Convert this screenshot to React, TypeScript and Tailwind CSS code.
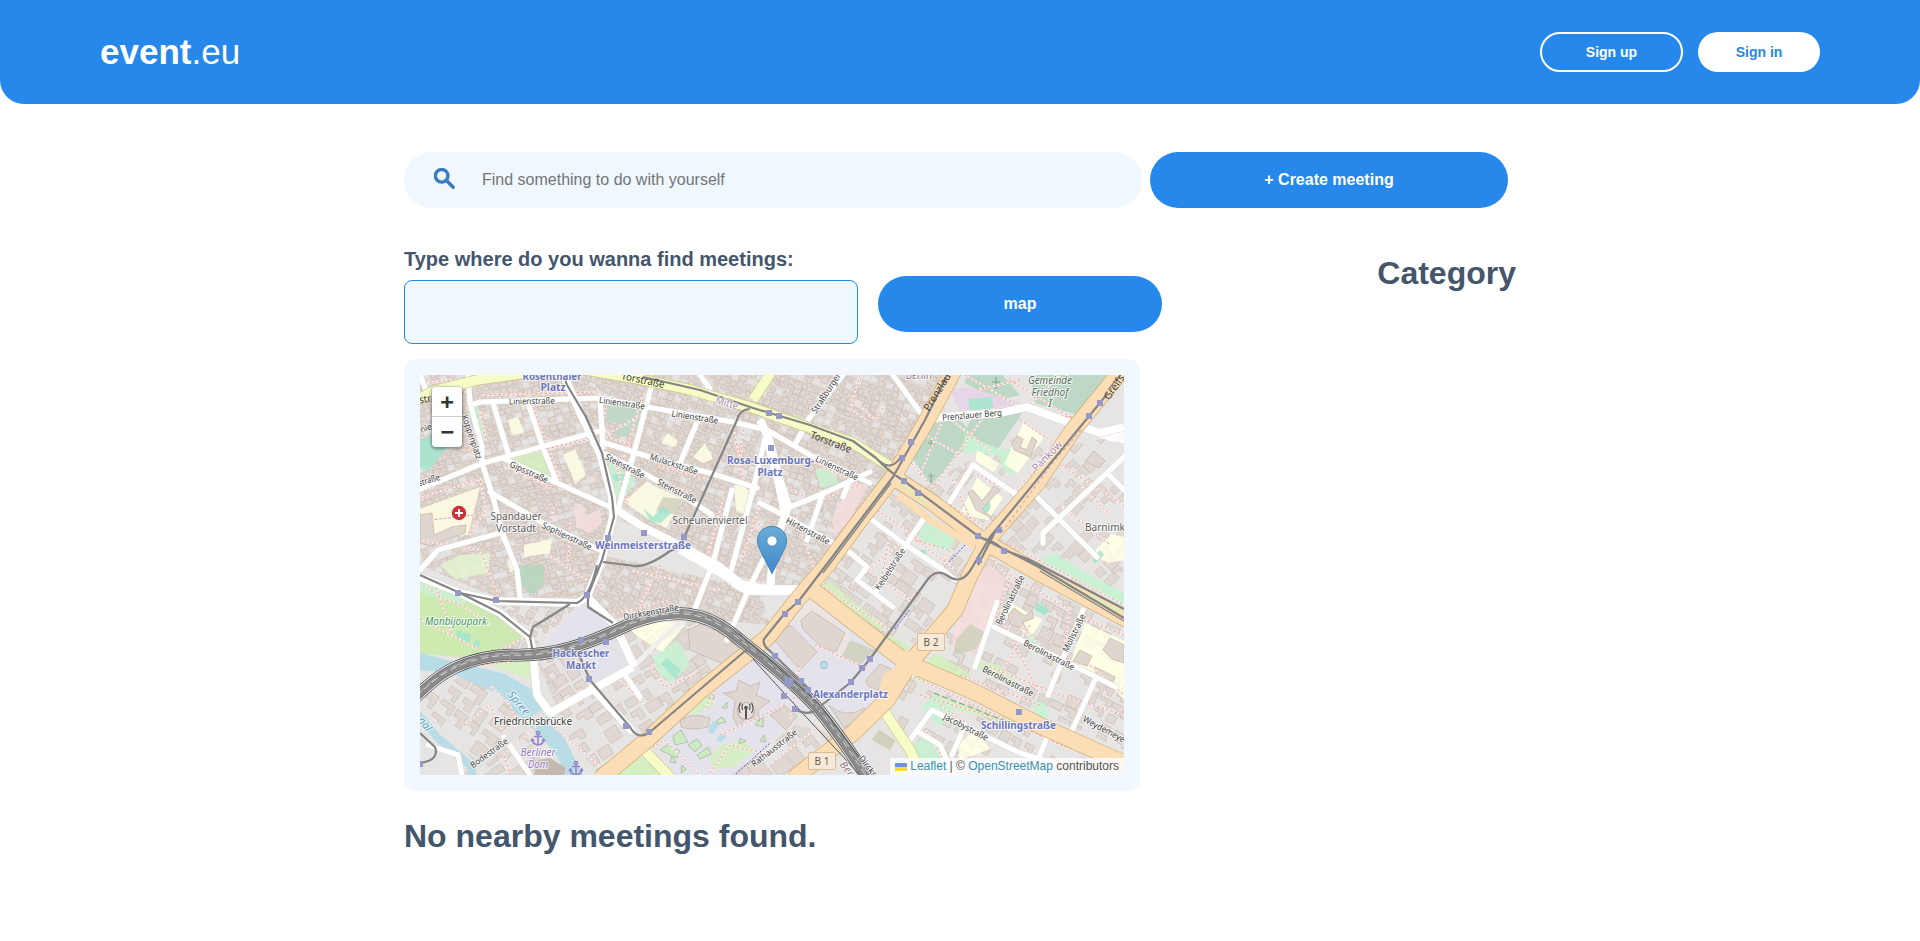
import React from "react";

const MAP_FONT = '"Noto Sans", "Open Sans", sans-serif';

type District = { clip: string; box: [number, number, number, number]; angle: number; cell: number; density: number; seed: number; dense?: boolean };

function random(seed: number) {
  let s = seed;
  return () => {
    s = (s * 1664525 + 1013904223) % 4294967296;
    return s / 4294967296;
  };
}

function footprints(d: District) {
  const next = random(d.seed);
  const [x0, y0, x1, y1] = d.box;
  const cx = (x0 + x1) / 2;
  const cy = (y0 + y1) / 2;
  const r = Math.hypot(x1 - x0, y1 - y0) / 2;
  let path = "";
  let yards = "";
  const c = d.cell;
  for (let y = cy - r; y < cy + r; y += c) {
    for (let x = cx - r; x < cx + r; x += c * 1.15) {
      const px = x + next() * 2;
      const py = y + next() * 2;
      if (next() > d.density) {
        yards += `M${px.toFixed(1)} ${py.toFixed(1)}h${(c * 0.9).toFixed(1)}v${(c * 0.7).toFixed(1)}h${(-c * 0.9).toFixed(1)}z`;
        continue;
      }
      const w = c * (0.7 + next() * 0.45);
      const h = c * (0.55 + next() * 0.45);
      const n = w * (0.3 + next() * 0.3);
      path += next() > 0.5
        ? `M${px.toFixed(1)} ${py.toFixed(1)}h${w.toFixed(1)}v${h.toFixed(1)}h${(-n).toFixed(1)}v${(-h / 2).toFixed(1)}h${(n - w).toFixed(1)}z`
        : `M${px.toFixed(1)} ${py.toFixed(1)}h${w.toFixed(1)}v${h.toFixed(1)}h${(-w).toFixed(1)}z`;
    }
  }
  return { path, yards, transform: `rotate(${d.angle} ${cx} ${cy})` };
}

const districts: District[] = [
  { clip: "M0 0H150L185 80L190 140L178 190L165 222L80 224L0 190Z", box: [0, 0, 190, 224], angle: -15, cell: 6.8, density: 0.76, seed: 7, dense: true },
  { clip: "M150 0H530L470 100L380 215L310 200L190 140L185 80Z", box: [150, 0, 530, 215], angle: 19, cell: 6.8, density: 0.76, seed: 31, dense: true },
  { clip: "M180 180L340 215L350 250L300 245L250 232L190 245L168 222Z", box: [165, 180, 350, 255], angle: 22, cell: 7, density: 0.8, seed: 13, dense: true },
  { clip: "M60 232L160 228L112 275H75Z", box: [60, 228, 160, 275], angle: 25, cell: 8, density: 0.75, seed: 99 },
  { clip: "M0 318L60 295L110 345L60 392L0 330Z", box: [0, 295, 110, 392], angle: 35, cell: 15, density: 0.7, seed: 17 },
  { clip: "M40 400L100 350L130 400Z", box: [40, 350, 130, 400], angle: -34, cell: 12, density: 0.75, seed: 21 },
  { clip: "M115 280L190 250L300 245L335 278L180 400L150 365Z", box: [115, 245, 335, 400], angle: -32, cell: 14, density: 0.78, seed: 5 },
  { clip: "M475 115L555 170L535 220L485 278L398 210Z", box: [398, 115, 555, 278], angle: 35, cell: 13, density: 0.6, seed: 44 },
  { clip: "M532 95L600 60L640 75L570 155L500 115Z", box: [500, 60, 640, 155], angle: -50, cell: 14, density: 0.5, seed: 58 },
  { clip: "M650 70L704 60V235L575 165Z", box: [575, 60, 704, 235], angle: -45, cell: 12, density: 0.5, seed: 71 },
  { clip: "M565 180L704 255V375L495 282Z", box: [495, 180, 704, 375], angle: 27, cell: 12, density: 0.55, seed: 83 },
  { clip: "M485 300L704 394V400H510L470 335Z", box: [470, 300, 704, 400], angle: 28, cell: 12, density: 0.55, seed: 91 },
  { clip: "M310 400L375 350L430 362L375 400Z", box: [310, 345, 430, 400], angle: -38, cell: 17, density: 0.85, seed: 64 },
];

const grounds: [string, string][] = [
  ["#cdebb0", "M0 202L57 230L110 262L75 276L38 282L0 278Z"],
  ["#d8efc4", "M62 286L112 281L116 306L83 295Z"],
  ["#e2f5cf", "M20 190L40 180L70 178L68 198L35 204Z"],
  ["#b5d6be", "M98 190L124 190L124 206Q118 222 110 218Q100 212 95 194Z"],
  ["#bdd8c4", "M186 28L226 34L220 52L186 46Z M196 52L214 50L208 62L194 60Z"],
  ["#c9f2d3", "M46 32L58 30L66 65L60 68Z"],
  ["#d5eec0", "M92 82L120 72L132 105L112 97Z"],
  ["#c9f2d3", "M187 84L197 92L216 104L200 132L195 120Z"],
  ["#a3e5ce", "M0 66L18 56L26 74L8 96L0 92Z"],
  ["#a3e5ce", "M192 99H205V106H194Z"],
  ["#c9f2d3", "M0 202L48 225L42 230L0 218Z"],
  ["#a3e5ce", "M37 255L51 259L50 268L36 264Z M55 264L60 266L57 276L53 272Z"],
  ["#c9f2d3", "M233 282L258 265L270 290L250 308L238 296Z"],
  ["#a3e5ce", "M241 289L247 283L261 295L255 304Z"],
  ["#ffffe5", "M210 255L224 247L256 247L265 250L242 277L226 267Z"],
  ["#ffffe5", "M0 134L60 112L48 160L4 164Z M88 45L98 42L104 58L92 60Z"],
  ["#ffffe5", "M143 80L155 74L166 100L155 109L150 96Z M104 170L132 164L130 178L104 182Z M88 184L96 183L97 192L90 198Z"],
  ["#ffffe5", "M204 127L226 107L263 124L246 153L230 145Z M273 82L285 68L293 84L283 88Z M241 68L248 58L258 66L255 72Z M314 110H332L332 118L327 140L316 136Z"],
  ["#d0d0bd", "M243 122L262 124L256 140L236 136Z"],
  ["#a3e5ce", "M223 133L233 142L243 131L251 138L241 148L231 147Z"],
  ["#f5dede", "M154 128L163 130L166 140L180 135L182 148L170 158L156 152Z"],
  ["#bdd8c4", "M492 82L511 49L539 44L555 62L511 110Z M544 56L552 44L602 38L577 75L555 66Z"],
  ["#bdd8c4", "M547 0H582L600 20L578 25L545 8Z M610 0H686L667 42L615 28Z"],
  ["#c9f2d3", "M545 60L582 75L604 72L594 99L584 96L578 80L543 76Z"],
  ["#e6d6e6", "M530 15L548 12L600 27L590 33L540 35Z"],
  ["#a3e5ce", "M548 24L572 22L573 34L550 35Z"],
  ["#ffffe5", "M584 89L604 47L623 63L598 98Z M540 140L557 103L583 123L568 145Z M557 75L579 88L574 97L556 86Z"],
  ["#c9f2d3", "M395 96L410 90L418 108L401 113Z M505 145L536 160L530 178L497 165Z"],
  ["#f5dede", "M412 144L430 108L448 110L430 145L415 161Z M545 205L570 190L586 204L572 250L555 278L532 270Z"],
  ["#e4e3ec", "M370 244L394 227L487 288L458 343L420 360L382 328L350 280L350 265Z"],
  ["#e4e3ec", "M240 357L340 276L385 332L340 375L312 400H252Z"],
  ["#e4e3ec", "M155 235L172 232L195 252L214 290L180 310L165 300L158 272L120 285L120 276Z"],
  ["#d0d0bd", "M430 265L455 275L440 290L422 281Z M459 355L475 365L470 375L452 365Z M536 264L550 249L566 258L555 275L534 279Z"],
  ["#eee5df", "M373 243L392 225L416 248L430 260L420 285Z"],
  ["#ffffe5", "M580 235L590 228L622 245L610 263Z M665 248L704 266V325L690 308L650 288Z M673 178L692 159L704 162V185L688 188Z M538 370L555 355L570 374L540 385Z"],
  ["#d5eec0", "M510 318L585 342L635 357L600 352L520 330Z M580 290L605 318L580 305L548 285Z M492 305L515 278L552 300L540 310Z"],
  ["#c9f2d3", "M605 250L624 275L610 272Z M502 332L514 320L537 330L520 352Z M612 325L625 328L628 342L618 345Z"],
  ["#d5eec0", "M408 205L440 232L465 250L460 255L400 215Z M470 260L490 272L486 277L465 262Z"],
  ["#c9f2d3", "M490 372L510 358L530 390L500 400Z M635 178L660 195L704 218V232L620 185Z"],
  ["#a3e5ce", "M618 228L629 234L625 240L615 235Z M562 125C568 120 574 130 568 137C562 138 560 130 562 125Z M672 185L680 175L684 180L675 188Z M500 175H506V183H500Z"],
  ["#d5eec0", "M190 400L222 382L240 400Z M245 333L290 316L294 330L275 340Z"],
  ["#d5eec0", "M290 382L300 370L322 365L335 375L315 392L292 394Z"],
  ["#ffffff", "M660 55L704 50V68L690 66Z"],
];

const streets = [
  "M48 0L50 28L62 72L62 88L73 122L82 157L97 195L100 222", "M52 30L60 27L180 23L227 32L313 47L347 55L390 80L450 108",
  "M73 28L88 78", "M108 28L122 70L137 108", "M0 114L63 88L183 55", "M180 23L183 72", "M185 68L233 83L290 98L337 113",
  "M183 78L227 100L270 125L292 140", "M233 5L216 70L198 135", "M278 45L260 88", "M83 83L137 108L197 135", "M70 117L123 148L180 175",
  "M0 195L18 175L80 158", "M347 55L333 115L310 200", "M312 115L293 188L273 238", "M343 185L327 218L307 265", "M340 128L367 142L413 168",
  "M370 132L400 120L450 97", "M403 118L387 165", "M430 105L423 122", "M423 0L388 45L375 70", "M0 0L8 20", "M473 0L500 37", "M280 0L290 14",
  "M704 82L687 98L623 158V168", "M617 122L677 182", "M687 98L704 115", "M530 127L553 90L597 120", "M452 145L483 168L523 195L535 205",
  "M505 142L487 168L470 195L455 218", "M427 175L447 192L437 205L473 232", "M577 227L555 292", "M574 252L640 284L696 312",
  "M663 235L628 320", "M675 305L650 360", "M512 335L600 378L640 390", "M512 335L490 365M500 358L520 370L530 392", "M545 350L532 380M627 362L612 400",
  "M205 300L220 322M84 362L110 400", "M8 370L38 380L42 400",
];
const avenues = [
  "M142 -4L162 42L180 78L192 122L193 142L182 185L167 222", "M197 135L223 152L263 172L300 192L317 208L350 215L378 215", "M340 45L348 62L357 98L368 132L360 155L352 190L350 214",
  "M0 202L40 218L77 226L157 228L167 222L195 250L214 291", "M510 43L580 38L607 32L650 48L680 58L704 52", "M170 310L213 357", "M40 218L80 238L110 262",
  "M110 263L113 277L117 320L130 338L213 292",
];
const yellowRoads = ["M-4 26L13 16L57 5L113 -3", "M160 -6L213 3L267 14L330 32L390 53L433 68L474 94", "M352 -4L333 25", "M219 370L252 404", "M464 336L490 375L503 404"];
const orangeRoads = ["M534 -5L507 45L473 102L440 145L407 190L377 225L348 262L280 316L227 365L180 404", "M473 102L513 128L563 166L617 197L708 245", "M702 -5L653 55L617 108L570 162L550 200L535 235L490 288L467 325L433 358L397 385L373 404", "M390 213L440 252L487 288L557 318L623 352L708 390"];
const tramLines = [
  "M142 -4L147 10L166 42L182 78L192 122L194 142L182 185L168 220V232L193 248", "M223 2L280 15L333 33L390 50L433 66L456 83Q468 96 484 106L558 161L617 191L704 243",
  "M330 34Q320 34 317 45L263 165Q262 172 250 176Q228 192 215 191L183 187", "M527 0L505 45L473 102L410 185L378 227L365 238L344 264Q342 270 350 276L390 315",
  "M688 18L570 162L550 196Q540 210 528 201Q517 193 508 204L450 284L430 308L398 333", "M575 157L558 190M456 83Q470 98 480 83", "M0 200L40 218L77 226L157 228Q170 222 177 190",
  "M40 218L80 238L110 262L113 278M150 229L113 252L110 262", "M160 282L170 305L210 352Q218 366 230 357L325 276Q332 276 344 284", "M0 358L15 372Q20 385 0 388", "M562 163Q574 166 584 175L608 184L704 234", "M375 334Q388 342 400 333",
];
const tramTwins = ["M471 108L403 198", "M620 196L704 246", "M688 15L700 0"];
const railway = "M-4 322C20 297 45 282 90 280C135 282 170 268 210 249C255 231 285 238 310 257C345 285 375 308 397 333C420 360 432 380 448 404";

const footpaths = [
  "M0 9L40 4M20 24L48 16M60 34L66 66M58 40L48 80M0 123L60 104L66 135L50 160M10 145L55 140M90 86L130 112M196 90L208 130M186 30L182 60L215 72",
  "M313 50L322 100L332 125M325 45L318 98M340 130L320 190M150 145L148 190M135 130L126 160M128 180L158 200L182 212M0 165L60 175L78 220",
  "M76 32L90 76M112 28L140 105M60 20L178 17M186 60L228 36M200 88L270 118M236 90L290 105M222 20L202 90M86 90L134 115M100 80L180 62",
  "M3 210L24 224L45 232L70 250M0 244L60 275M15 208L32 260M62 290L112 284M70 280L105 262M76 232L112 262M120 286L210 250M118 350L84 380L90 400",
  "M120 340L190 400M70 310L90 330L98 350M44 350L70 330L100 390M215 290L265 240M230 290L245 312L275 300M310 205L340 220M195 300L225 330",
  "M210 195L300 215M290 200L275 240M240 190L220 230M190 240L250 225M304 120L288 180M322 140L350 155M276 180L306 195",
  "M380 80L440 110L400 125M360 110L400 128M375 140L395 195M430 22L455 45L465 30M400 60L470 90M440 0L430 35L447 45",
  "M500 100L525 40L610 30L680 60M491 88L515 115M505 60L540 80M515 110L565 40M545 0L605 35L670 45M557 15L600 5M530 44L570 75M590 5L660 48M610 30L640 0",
  "M600 45L640 72L590 120M530 130L570 155M545 92L590 118M530 100L558 160M625 80L704 130M640 130L690 170M660 110L690 140M590 170L704 230",
  "M430 210L490 160L535 195M440 190L490 225L520 190M400 210L470 255M470 160L460 210M495 165L530 175L520 195M450 130L500 165",
  "M500 275L570 180L590 205L560 280M590 200L650 235L640 300M565 290L640 320L704 340M580 240L620 320M610 250L580 300M655 240L704 260",
  "M490 300L640 370L704 390M500 320L600 350M500 345L530 395M520 330L580 370M540 300L620 330M600 250L625 275M670 290L704 320M630 210L680 220",
  "M190 400L245 365L280 400M245 340L295 315L285 335M290 398L310 370L350 380M350 390L400 350M380 290L370 345M395 270L450 295M300 360L365 330",
];

type Kind = "station" | "street" | "major" | "district" | "cemetery" | "park" | "water" | "sight" | "border" | "border2";
const kindStyle: Record<Kind, { fill: string; size: number; weight?: number; italic?: boolean }> = {
  station: { fill: "#6d76bd", size: 10, weight: 700 },
  street: { fill: "#3c3c3c", size: 8.8 },
  major: { fill: "#3c3c34", size: 10.2 },
  district: { fill: "#5c5c5c", size: 10.4 },
  cemetery: { fill: "#5f6f66", size: 10, italic: true },
  park: { fill: "#43946a", size: 10, italic: true },
  water: { fill: "#5aa0c4", size: 11, italic: true },
  sight: { fill: "#8e78c4", size: 10, italic: true },
  border: { fill: "#a98cb4", size: 10.4 },
  border2: { fill: "#8d7a80", size: 10, italic: true },
};
const labels: [string, number, number, number, number, Kind][] = [
  ["Rosenthaler", 132, 1, 0, 59, "station"], ["Platz", 133, 12.5, 0, 25, "station"], ["Rosa-Luxemburg-", 350.5, 85.5, 0, 87, "station"], ["Platz", 350, 97, 0, 25, "station"],
  ["Weinmeisterstraße", 223, 170.5, 0, 96, "station"], ["Hackescher", 161, 278, 0, 57, "station"], ["Markt", 161, 290, 0, 30, "station"], ["Alexanderplatz", 430.5, 319.5, 0, 75, "station"], ["Schillingstraße", 598.5, 350, 0, 75, "station"],
  ["Linienstraße", 112, 26, -1, 46, "street"], ["Linienstraße", 202, 28, 8, 46, "street"], ["Linienstraße", 275, 42, 9, 47, "street"], ["Torstraße", 223, 5, 12, 44, "major"], ["Torstraße", 411, 67, 21, 43, "major"],
  ["Linienstraße", 417, 93, 25, 46, "street"], ["Koppenplatz", 52, 62, 71, 46, "street"], ["Gipsstraße", 109, 97, 24, 41, "street"], ["Steinstraße", 205, 91, 27, 43, "street"], ["Mulackstraße", 254, 89, 18, 50, "street"], ["Steinstraße", 257, 116, 27, 43, "street"],
  ["Sophienstraße", 147, 161, 25, 54, "street"], ["straße", 9, 105, -17, 22, "street"], ["str", 5, 24, -10, 12, "major"], ["nie", 6, 53, -22, 12, "street"], ["Hirtenstraße", 388, 156, 28, 48, "street"], ["Straßburger", 406, 18, -57, 46, "street"],
  ["Prenzlau", 517, 17, -58, 42, "major"], ["Greifs", 694, 12, -55, 28, "major"], ["Prenzlauer Berg", 552, 40, -5, 60, "street"], ["Keibelstraße", 470, 194, -57, 48, "street"], ["Berolinastraße", 590, 225, -64, 54, "street"],
  ["Berolinastraße", 629, 280, 27, 56, "street"], ["Berolinastraße", 588, 306, 27, 56, "street"], ["Mollstraße", 654, 258, -64, 41, "street"], ["Jacobystraße", 546, 352, 27, 49, "street"], ["Weydemeye", 684, 354, 28, 46, "street"],
  ["Rathausstraße", 354, 373, -38, 55, "street"], ["Dircks", 448, 391, 52, 24, "street"], ["Bodestraße", 69, 378, -36, 44, "street"], ["Dircksenstraße", 231, 237, -10, 56, "street"], ["Friedrichsbrücke", 113, 346.5, 0, 78, "major"],
  ["Spandauer", 96, 141, 0, 51, "district"], ["Vorstadt", 96, 153.5, 0, 40, "district"], ["Scheunenviertel", 290, 145.5, 0, 75, "district"], ["Barnimk", 685, 152, 0, 40, "district"],
  ["Gemeinde", 630, 5, 0, 44, "cemetery"], ["Friedhof", 630, 17, 0, 37, "cemetery"], ["I", 630, 28.5, 0, 4, "cemetery"], ["Monbijoupark", 36, 246, 0, 62, "park"], ["Spree", 99, 328, 50, 28, "water"], ["nal", 5, 349, 52, 15, "water"],
  ["Berliner", 118, 377, 0, 35, "sight"], ["Dom", 118, 389, 0, 20, "sight"], ["Mitte", 307, 28, 17, 23, "border"], ["Pankow", 627, 81, -45, 38, "border"], ["Berlin", 499, 0, 0, 26, "border2"], ["Bern", 429, 396, 50, 22, "border2"],
];

const stops: [number, number][] = [
  [188, 163], [224, 158], [264, 162], [349, 38], [359, 41], [351, 73], [491, 67], [482, 83], [484, 106], [498, 118], [558, 161], [579, 155], [584, 176], [559, 185], [680, 28], [669, 41],
  [38, 218], [76, 225], [167, 220], [161, 265], [186, 267], [169, 304], [206, 351], [229, 357], [0, 389], [378, 227], [365, 239], [355, 281], [381, 306], [388, 315], [364, 321], [375, 334], [450, 284], [442, 293], [431, 307], [599, 337],
];

const blocks = [
  "M381 245L392 236L425 258L416 277L401 272L382 253Z", "M352 262L370 250L397 277L380 295Z", "M350 340L365 331L377 341L366 355Z", "M409 330Q425 345 444 333L446 341L424 353Z", "M446 305L460 289L476 296L466 318L448 311Z",
  "M315 325L303 318L316 316L319 305L330 311L340 307L336 320L350 326L338 335L340 346L327 342L318 352L313 342Z", "M260 345Q272 337 290 343L288 352Q272 356 261 352Z",
  "M268 255L285 247L325 277L306 290L270 275Z", "M553 115L562 126L574 111L580 115L562 134L572 143L556 135L548 118Z", "M592 68L597 61L603 64L600 72L607 75L612 62L617 66L610 82L594 75Z",
  "M588 240L594 233L605 241L612 236L614 243L603 247L606 255L590 249Z", "M653 286L660 275L672 281L667 291Z M683 275L690 263L704 270V288L692 284Z M675 292L695 302L693 307L676 298Z", "M665 86L674 76L685 86L679 93Z",
  "M0 140L12 138L14 160L32 152L46 150L45 158L10 171L0 168Z",
];
const squares = [
  "M253 361L261 355L268 367L255 370Z", "M240 375L247 370L260 376L257 383Z", "M268 370L277 364L282 370L275 377Z", "M277 380L288 372L291 379L280 384Z", "M296 346L302 342L306 347L298 349Z", "M302 333L307 327V333Z", "M320 363L326 366L319 369Z", "M335 350L343 342V352Z", "M288 323L294 318V324Z", "M252 381L256 388L250 387Z", "M262 390L266 394L261 398Z", "M344 360L346 367L340 366Z",
];

const built = districts.map(footprints);

function Stroke({ paths, color, width, dash, cap = "butt" }: { paths: string[]; color: string; width: number; dash?: string; cap?: "butt" | "round" }) {
  return <path d={paths.join("")} fill="none" stroke={color} strokeWidth={width} strokeDasharray={dash} strokeLinecap={cap} strokeLinejoin="round" />;
}

function AnchorGlyph({ x, y }: { x: number; y: number }) {
  return (
    <g transform={`translate(${x} ${y})`} fill="none" stroke="#9583c8" strokeWidth="1.5">
      <circle cy="-5" r="1.6" />
      <path d="M0-3.4V6M-4-1.5H4M-6 1.5C-5 7-2 6 0 7C2 6 5 7 6 1.5M-7 3L-5.6 1L-4 3M7 3L5.6 1L4 3" />
    </g>
  );
}

function CityMap() {
  return (
    <svg className="block h-full w-full" viewBox="0 0 704 400" aria-label="Map of Berlin">
      <rect width="704" height="400" fill="#e6e5e4" />
      {grounds.map(([fill, d], i) => <path key={i} d={d} fill={fill} />)}
      <defs>
        {districts.map((d, i) => <clipPath id={`district-${i}`} key={i}><path d={d.clip} /></clipPath>)}
      </defs>
      {built.map((b, i) => (
        <g key={i} clipPath={`url(#district-${i})`}>
          {districts[i].dense && <path d={districts[i].clip} fill="#e0d8d2" />}
          {districts[i].dense && <path d={b.yards} transform={b.transform} fill="#e4e4e5" />}
          <path d={b.path} transform={b.transform} fill="#e0d8d2" stroke="#cdbfb5" strokeWidth=".7" />
        </g>
      ))}
      {grounds.map(([fill, d], i) => <path key={i} d={d} fill={fill} opacity={i === 29 || i === 30 ? 1 : 0.85} />)}
      <path d="M0 278L47 290L83 298L113 315L127 338L147 368L163 400H147L133 375L103 345L77 318L30 298L0 295Z" fill="#b9dde6" />
      <path d="M-3 338L17 362L52 392V404" fill="none" stroke="#b9dde6" strokeWidth="8" />
      <path d={blocks.join("")} fill="#dfd6d0" stroke="#c6b7ab" strokeWidth=".8" />
      <path d={squares.join("")} fill="#cdebc0" stroke="#a5aaa2" strokeWidth=".7" />
      <path d="M290 350L294 346L299 350L293 359L288 357Z M296 365L302 358L307 361L301 367Z" fill="#b9dde6" />
      <path d="M118 385L130 383L145 392V400H114Z" fill="#c5b9af" />
      <path d="M576 2V14M572 7H580M511 65V75M508 68H514M511 98V108M508 101H514" stroke="#98b7a1" strokeWidth="1.6" />
      <Stroke paths={footpaths} color="#f7f3f1" width={1.8} />
      <Stroke paths={footpaths} color="#f79a92" width={1} dash="2.6 2" />
      <Stroke paths={streets} color="#dad6d3" width={6.2} cap="round" />
      <Stroke paths={avenues} color="#dad6d3" width={8.8} />
      <Stroke paths={streets} color="#fff" width={5.2} cap="round" />
      <Stroke paths={["M213 292L240 265L273 238"]} color="#f1efee" width={5} />
      <Stroke paths={["M55 392L110 347L130 335"]} color="#e3e1e0" width={8} />
      <Stroke paths={avenues} color="#fff" width={7.8} />
      <path d="M340 43L350 55L356 75L362 100L372 130L363 158L356 185L354 211H347L350 188L357 160L361 140L355 110L346 75Z" fill="#fff" />
      <path d="M262 170L300 187L322 205Q335 211 378 210V220H330Q318 218 305 205L258 178Z" fill="#fff" />
      <Stroke paths={yellowRoads} color="#c5c783" width={11} />
      <Stroke paths={yellowRoads} color="#f7fbc8" width={9.8} />
      <Stroke paths={orangeRoads} color="#c9a568" width={17} />
      <Stroke paths={orangeRoads} color="#fcdeb6" width={15.8} />
      <path d="M463 300Q484 288 485 274L502 285L508 302L488 300L470 330L456 330Z" fill="#fcdeb6" />
      <path d="M478 120L512 146L555 171" fill="none" stroke="#fcdeb6" strokeWidth="7" />
      <Stroke paths={["M479 108L507 129", "M640 207L704 238"]} color="#d8eeb5" width={2.5} />
      <path d="M514 318L600 352" stroke="#98a48e" strokeWidth="1.3" strokeDasharray="6 3" fill="none" />
      <path d="M316 399L350 368M475 254L490 234M529 187L545 170" stroke="#4a4aff" strokeWidth="1" strokeDasharray="2 1.6" fill="none" />
      <path d="M582 157L631 90L661 55" stroke="#a889b8" strokeWidth="1.2" strokeDasharray="3 3" fill="none" opacity=".6" />
      <path d={railway} fill="none" stroke="#474747" strokeWidth="12.6" />
      <path d={railway} fill="none" stroke="#eeeeee" strokeWidth="11.2" />
      <path d={railway} fill="none" stroke="#6f6f6f" strokeWidth="9.4" />
      <path d={railway} fill="none" stroke="#8c8c8c" strokeWidth="7.6" />
      <path d={railway} fill="none" stroke="#dcdcdc" strokeWidth=".9" strokeDasharray="7 4" />
      <path d={railway} fill="none" stroke="#d0d0d0" strokeWidth=".7" strokeDasharray="9 6" transform="translate(1 -2)" />
      <path d="M318 258L350 285L400 330L453 400M333 284L375 330L440 400" fill="none" stroke="#555" strokeWidth="1" />
      <Stroke paths={tramLines} color="#858585" width={2.2} />
      <Stroke paths={tramTwins} color="#858585" width={1.3} />
      {stops.map(([x, y], i) => <rect key={i} x={x - 3} y={y - 3} width="6" height="6" fill="#9599c7" />)}
      <rect x="364.5" y="302.5" width="9" height="9" fill="#9599c7" />
      <circle cx="404" cy="290" r="3.6" fill="#b9dde6" stroke="#8db4c4" strokeWidth=".8" />
      <circle cx="39" cy="138" r="7.2" fill="#cb3237" />
      <path d="M39 134V142M35 138H43" stroke="#fff" strokeWidth="1.8" />
      <AnchorGlyph x={118} y={363} />
      <AnchorGlyph x={156} y={393} />
      <g transform="translate(326 336)" fill="none" stroke="#555" strokeWidth="1.1">
        <circle r="8.5" fill="#e8e1dc" stroke="#bcaea4" />
        <path d="M0-3V8M-3.200-7Q-5-4-3.200-1M3.200-7Q5-4 3.200-1M-5.500-8.500Q-8.500-3-5.500 2M5.500-8.500Q8.500-3 5.500 2" />
        <path d="M0-3V8" strokeWidth="2" />
        <circle cy="-3.500" r="1.300" fill="#555" />
      </g>
      {labels.map(([text, x, y, angle, width, kind], i) => {
        const k = kindStyle[kind];
        return (
          <text key={i} transform={`translate(${x} ${y}) rotate(${angle})`} dy=".35em" textAnchor="middle" textLength={width} lengthAdjust="spacingAndGlyphs" fontFamily={MAP_FONT} fontSize={k.size} fontWeight={k.weight} fontStyle={k.italic ? "italic" : undefined} fill={k.fill} stroke="#fff" strokeOpacity={kind === "major" && angle !== 0 ? 0 : 0.75} strokeWidth="2" strokeLinejoin="round" paintOrder="stroke">{text}</text>
        );
      })}
      {[{ t: "B 2", x: 511, y: 267 }, { t: "B 1", x: 402, y: 386 }].map((s) => (
        <g key={s.t}>
          <rect x={s.x - 13.5} y={s.y - 8.5} width="27" height="17" rx="1.5" fill="#f6e9d7" stroke="#dcbd96" />
          <text x={s.x} y={s.y + 3.6} textAnchor="middle" fontFamily={MAP_FONT} fontSize="10" fill="#6b5a3c">{s.t}</text>
        </g>
      ))}
      <defs>
        <linearGradient id="pin" x1="0" y1="0" x2="0" y2="1"><stop stopColor="#6aadd8" /><stop offset="1" stopColor="#3f88cb" /></linearGradient>
      </defs>
      <path d="M352 151.5C343.500 151.500 337.500 158 337.500 165.500C337.500 169.500 339 173 341 177L352 198.500L363 177C365 173 366.500 169.500 366.500 165.500C366.500 158 360.500 151.500 352 151.500Z" fill="url(#pin)" stroke="#3b83bd" strokeWidth="1" />
      <circle cx="352" cy="166" r="5" fill="#fff" stroke="#3b83bd" strokeWidth=".6" />
    </svg>
  );
}

function SearchGlyph() {
  return (
    <svg className="h-[22px] w-[22px]" viewBox="0 0 22 22" fill="none">
      <circle cx="7.700" cy="7.800" r="6.300" stroke="#66798f" strokeWidth="3.400" />
      <path d="M12.500 12.500L19.200 19.200" stroke="#66798f" strokeWidth="3.600" strokeLinecap="round" />
      <circle cx="7.700" cy="7.800" r="6.300" stroke="#2680d8" strokeWidth="2.200" />
      <path d="M12.500 12.500L19.200 19.200" stroke="#2680d8" strokeWidth="2.200" strokeLinecap="round" />
    </svg>
  );
}

export default function App() {
  return (
    <div className="h-[941px] w-full overflow-hidden bg-white font-['Liberation_Sans',Arial,sans-serif] text-[#44566b]">
      <header className="flex h-[104px] items-center justify-between rounded-b-3xl bg-[#2688eb] px-[100px] text-white">
        <div className="text-[35px] leading-10"><span className="font-bold">event</span>.eu</div>
        <nav className="flex gap-[15px] text-sm font-bold">
          <button className="h-10 w-[143px] rounded-[20px] border-2 border-white">Sign up</button>
          <button className="h-10 w-[122px] rounded-[20px] bg-white text-[#2688eb]">Sign in</button>
        </nav>
      </header>

      <main className="ml-[404px] w-[1112px] pt-12">
        <div className="flex gap-2">
          <label className="flex h-14 w-[738px] items-center rounded-[28px] bg-[#eff7ff] pl-[30px]">
            <span className="pb-0.5"><SearchGlyph /></span>
            <input className="ml-[26px] w-[600px] bg-transparent text-base outline-none placeholder:text-[#757575]" placeholder="Find something to do with yourself" />
          </label>
          <button className="h-14 w-[358px] rounded-[28px] bg-[#2688eb] text-base font-bold text-white">+ Create meeting</button>
        </div>

        <div className="flex justify-between pt-10">
          <section>
            <div className="flex gap-5">
              <div className="w-[454px]">
                <h2 className="h-8 text-xl leading-[22px] font-bold">Type where do you wanna find meetings:</h2>
                <input className="block h-16 w-full rounded-lg border border-[#2688eb] bg-[#eff7ff] px-4 outline-none" />
              </div>
              <button className="mt-7 h-14 w-[284px] rounded-[28px] bg-[#2688eb] text-base font-bold text-white">map</button>
            </div>

            <div className="mt-[15px] h-[432px] w-[736px] rounded-xl bg-[#f2f8ff] p-4">
              <div className="relative h-[400px] w-[704px] overflow-hidden">
                <CityMap />
                <div className="absolute top-3 left-3 w-[30px] rounded-sm font-['DejaVu_Sans_Mono','Liberation_Mono',monospace] text-[22px] leading-[30px] font-bold text-[#333] shadow-[0_1px_3px_1px_rgba(0,0,0,0.4)]">
                  <button className="block h-[30px] w-[30px] rounded-t-sm border-b border-[#ccc] bg-white leading-[30px]">+</button>
                  <button className="block h-[30px] w-[30px] rounded-b-sm bg-white leading-[30px]">−</button>
                </div>
                <div className="absolute right-0 bottom-0 flex h-[17px] items-center bg-white/80 px-[5px] text-xs leading-[17px] whitespace-pre text-[#555]">
                  <svg className="mr-[3px] h-2 w-3" viewBox="0 0 12 8"><path fill="#6c93e4" d="M0 0h12v4H0z" /><path fill="#ffdb36" d="M0 4h12v4H0z" /></svg>
                  <span className="text-[#3a8fb3]">Leaflet</span> | © <span className="text-[#3a8fb3]">OpenStreetMap</span> contributors
                </div>
              </div>
            </div>
            <h1 className="mt-[25px] text-[32px] leading-10 font-bold">No nearby meetings found.</h1>
          </section>
          <h1 className="mt-[5px] text-[32px] leading-10 font-bold">Category</h1>
        </div>
      </main>
    </div>
  );
}
